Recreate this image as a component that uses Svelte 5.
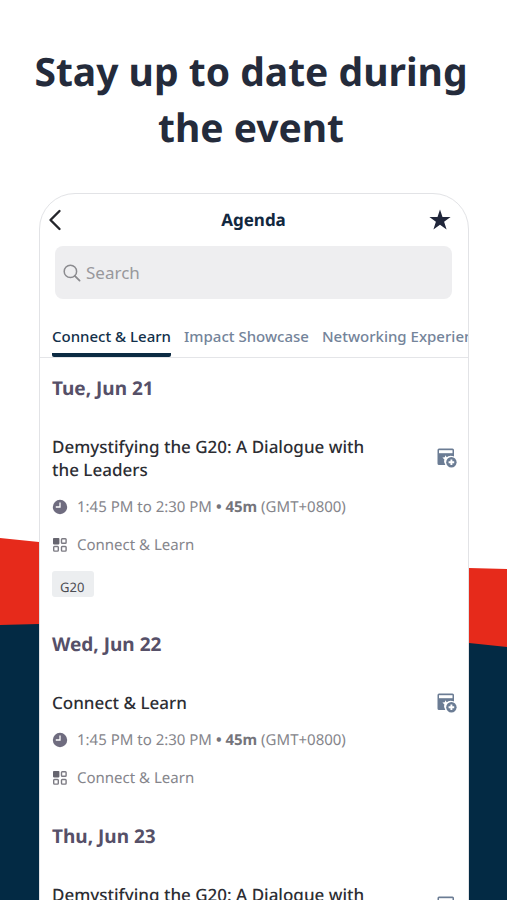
<script>
  const tabs = ['Connect & Learn', 'Impact Showcase', 'Networking Experience'];

  let activeTab = $state(0);
  let query = $state('');

  const time = { range: '1:45 PM to 2:30 PM', duration: '45m', zone: '(GMT+0800)' };

  const days = [
    {
      date: 'Tue, Jun 21',
      title: 'Demystifying the G20: A Dialogue with the Leaders',
      track: 'Connect & Learn',
      tags: ['G20']
    },
    {
      date: 'Wed, Jun 22',
      title: 'Connect & Learn',
      track: 'Connect & Learn',
      tags: []
    },
    {
      date: 'Thu, Jun 23',
      title: 'Demystifying the G20: A Dialogue with the Leaders',
      track: 'Connect & Learn',
      tags: ['G20']
    }
  ];
</script>

<main class="page">
  <svg class="backdrop" viewBox="0 0 507 900" preserveAspectRatio="none" aria-hidden="true">
    <path d="M0 538 L39 542 L469 568 L507 569 V900 H0 Z" fill="#e62a1b" />
    <path d="M0 625 L39 624 L300 624 L469 643 L507 647 V900 H0 Z" fill="#032a44" />
  </svg>

  <h1>Stay up to date during the event</h1>

  <section class="phone">
    <header class="bar">
      <button class="icon-button" aria-label="Back">
        <svg width="14" height="22" viewBox="0 0 14 22">
          <path d="M11.5 2 L2.5 11 L11.5 20" fill="none" stroke="#25262b" stroke-width="2.4" stroke-linecap="round" stroke-linejoin="round" />
        </svg>
      </button>
      <h2>Agenda</h2>
      <button class="icon-button star" aria-label="Favourites">
        <svg width="22" height="22" viewBox="0 0 22 22">
          <path d="M11 0.5 L13.5 8 H21.6 L15.1 12.7 L17.6 20.6 L11 15.8 L4.4 20.6 L6.9 12.7 L0.4 8 H8.5 Z" fill="#20263a" />
        </svg>
      </button>
    </header>

    <label class="search">
      <svg width="18" height="18" viewBox="0 0 18 18" aria-hidden="true">
        <circle cx="7.4" cy="7.4" r="6.2" fill="none" stroke="#8b8b8f" stroke-width="1.5" />
        <path d="M11.8 11.8 L16.6 16.6" stroke="#8b8b8f" stroke-width="1.8" stroke-linecap="round" />
      </svg>
      <input type="text" placeholder="Search" aria-label="Search" bind:value={query} />
    </label>

    <nav class="tabs">
      {#each tabs as tab, i}
        <button class="tab" class:active={activeTab === i} onclick={() => (activeTab = i)}>{tab}</button>
      {/each}
    </nav>

    <div class="agenda">
      {#each days as day}
        <section class="day">
          <h3>{day.date}</h3>
          <article>
            <div class="title-row">
              <h4>{day.title}</h4>
              <button class="icon-button" aria-label="Add to my agenda">
                <svg width="20" height="20" viewBox="0 0 20 20">
                  <path d="M2 0.5 H15.5 Q17 0.5 17 2 V9 A6 6 0 0 0 8.4 17 H2 Q0.5 17 0.5 15.5 V2 Q0.5 0.5 2 0.5 Z" fill="#6b7c94" />
                  <rect x="2" y="2.2" width="13.5" height="3" fill="#fff" />
                  <path d="M8.6 7.2 L9.6 9.2 L11.8 9.4 L10.2 11 L8.9 15 L7.2 14.2 L7.4 11.4 L5.4 9.6 L7.7 9.2 Z" fill="#fff" />
                  <circle cx="14.4" cy="14.2" r="6.2" fill="#fff" />
                  <circle cx="14.4" cy="14.2" r="5.2" fill="#6b7c94" />
                  <path d="M14.4 11.4 V17 M11.6 14.2 H17.2" stroke="#fff" stroke-width="1.9" />
                </svg>
              </button>
            </div>
            <p class="meta">
              <svg width="16" height="16" viewBox="0 0 16 16" aria-hidden="true">
                <circle cx="8" cy="8" r="7.2" fill="#6f6c7f" />
                <path d="M8 3.4 V8 H3.8" fill="none" stroke="#fff" stroke-width="1.3" />
              </svg>
              <span>{time.range} <b>• {time.duration}</b> {time.zone}</span>
            </p>
            <p class="meta">
              <svg width="16" height="16" viewBox="0 0 16 16" aria-hidden="true">
                <rect x="1" y="1" width="6.4" height="6.4" rx="0.8" fill="#66656f" />
                <g fill="none" stroke="#7c7b83" stroke-width="1.4">
                  <rect x="9.5" y="1.7" width="4.6" height="4.6" rx="0.8" />
                  <rect x="1.7" y="9.5" width="4.6" height="4.6" rx="0.8" />
                  <rect x="9.5" y="9.5" width="4.6" height="4.6" rx="0.8" />
                </g>
              </svg>
              <span>{day.track}</span>
            </p>
            {#if day.tags.length}
              <div class="tags">
                {#each day.tags as tag}
                  <span class="tag">{tag}</span>
                {/each}
              </div>
            {/if}
          </article>
        </section>
      {/each}
    </div>
  </section>
</main>

<style>
  :global(body) {
    margin: 0;
    background: #fff;
  }

  .page {
    position: relative;
    box-sizing: border-box;
    height: 100vh;
    overflow: hidden;
    padding: 44px 38px 0 39px;
    font-family: 'Noto Sans', 'Open Sans', sans-serif;
    text-rendering: geometricPrecision;
  }

  .backdrop {
    position: absolute;
    inset: 0;
    width: 100%;
    height: 100%;
  }

  h1,
  h2,
  h3,
  h4,
  p {
    margin: 0;
  }

  h1 {
    position: relative;
    margin: 0 -10px 37px -16px;
    color: #242b3b;
    font-size: 39px;
    font-weight: 700;
    line-height: 56px;
    text-align: center;
  }

  button {
    padding: 0;
    border: 0;
    background: none;
    font: inherit;
    cursor: pointer;
  }

  .phone {
    position: relative;
    overflow: hidden;
    border: 1px solid #e2e3e6;
    border-radius: 36px 36px 0 0;
    background: #fff;
  }

  .bar {
    display: grid;
    grid-template-columns: 1fr auto 1fr;
    align-items: center;
    height: 52px;
    padding: 0 17px 0 8px;
  }

  .icon-button {
    display: flex;
    flex: none;
    justify-self: start;
  }

  .star {
    justify-self: end;
  }

  h2 {
    padding-left: 8px;
    color: #12283f;
    font-size: 17px;
    font-weight: 700;
    line-height: 24px;
  }

  .search {
    display: flex;
    align-items: center;
    gap: 5px;
    height: 53px;
    margin: 0 16px 0 15px;
    padding: 0 8px;
    border-radius: 8px;
    background: #eeeef0;
  }

  .search input {
    flex: 1;
    min-width: 0;
    padding: 0;
    border: 0;
    outline: 0;
    background: none;
    color: #25262b;
    font: inherit;
    font-size: 17px;
  }

  .search input::placeholder {
    color: #98989c;
    opacity: 1;
  }

  .tabs {
    display: flex;
    gap: 13px;
    margin-top: 22px;
    padding-left: 12px;
    overflow: hidden;
    border-bottom: 1px solid #e4e5e8;
  }

  .tab {
    flex: none;
    height: 36px;
    padding-bottom: 2px;
    border-bottom: 4px solid transparent;
    color: #74849a;
    font-size: 15px;
    font-weight: 500;
    line-height: 28px;
    white-space: nowrap;
  }

  .tab.active {
    border-color: #0c2b43;
    border-radius: 2px;
    color: #12304a;
  }

  .agenda {
    padding: 16px 11px 0 12px;
  }

  .day {
    margin-bottom: 33px;
  }

  h3 {
    margin-bottom: 33px;
    color: #565068;
    font-size: 19px;
    font-weight: 700;
    line-height: 28px;
  }

  .title-row {
    display: flex;
    justify-content: space-between;
    align-items: center;
    margin-bottom: 15px;
  }

  h4 {
    max-width: 330px;
    color: #2c2d33;
    font-size: 17px;
    font-weight: 500;
    line-height: 23px;
  }

  .meta {
    display: flex;
    align-items: center;
    gap: 9px;
    color: #85858b;
    font-size: 15px;
    line-height: 22px;
  }

  .meta + .meta {
    margin-top: 16px;
  }

  .meta b {
    color: #74747b;
    font-weight: 700;
  }

  .tags {
    display: flex;
    gap: 8px;
    margin-top: 15px;
  }

  .tag {
    box-sizing: border-box;
    height: 26px;
    padding: 6px 10px 0 8px;
    border-radius: 3px;
    background: #eceef0;
    color: #4c4d54;
    font-size: 13px;
    line-height: 20px;
  }
</style>
